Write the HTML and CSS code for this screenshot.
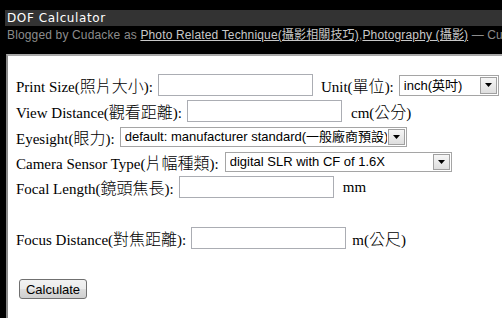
FILE: index.html
```html
<!DOCTYPE html>
<html lang="zh-Hant">
<head>
<meta charset="utf-8">
<title>DOF Calculator</title>
<link rel="stylesheet" href="styles.css">
</head>
<body>
<header class="blog-head">
  <h1 class="title">DOF Calculator</h1>
  <p class="byline">Blogged by Cudacke as <a href="#">Photo Related Technique(攝影相關技巧)</a>,<a href="#">Photography (攝影)</a> — Cudacke</p>
</header>
<main class="panel">
  <form class="dof-form">
    <div class="row">
      <label class="lbl">Print Size(<span class="zh">照片大小</span>):</label>
      <input class="txt" type="text">
      <label class="lbl unit-lbl">Unit(<span class="zh">單位</span>):</label>
      <span class="select sel-unit">
        <select><option>inch(英吋)</option><option>cm(公分)</option></select>
        <span class="drop"><svg width="7" height="4" viewBox="0 0 7 4"><path d="M0 0H7L3.5 4Z" fill="#000"/></svg></span>
      </span>
    </div>
    <div class="row">
      <label class="lbl">View Distance(<span class="zh">觀看距離</span>):</label>
      <input class="txt" type="text">
      <span class="lbl after">cm(<span class="zh">公分</span>)</span>
    </div>
    <div class="row row-sel">
      <label class="lbl">Eyesight(<span class="zh">眼力</span>):</label>
      <span class="select sel-eye">
        <select><option>default: manufacturer standard(一般廠商預設)</option></select>
        <span class="drop"><svg width="7" height="4" viewBox="0 0 7 4"><path d="M0 0H7L3.5 4Z" fill="#000"/></svg></span>
      </span>
    </div>
    <div class="row row-sel">
      <label class="lbl">Camera Sensor Type(<span class="zh">片幅種類</span>):</label>
      <span class="select sel-cam">
        <select><option>digital SLR with CF of 1.6X</option></select>
        <span class="drop"><svg width="7" height="4" viewBox="0 0 7 4"><path d="M0 0H7L3.5 4Z" fill="#000"/></svg></span>
      </span>
    </div>
    <div class="row">
      <label class="lbl">Focal Length(<span class="zh">鏡頭焦長</span>):</label>
      <input class="txt" type="text">
      <span class="lbl after">mm</span>
    </div>
    <div class="row spacer"></div>
    <div class="row">
      <label class="lbl">Focus Distance(<span class="zh">對焦距離</span>):</label>
      <input class="txt" type="text">
      <span class="lbl after-m">m(<span class="zh">公尺</span>)</span>
    </div>
    <div class="row spacer"></div>
    <div class="row">
      <button class="btn" type="button">Calculate</button>
    </div>
  </form>
</main>
</body>
</html>
```
FILE: styles.css
```css
html, body {
  margin: 0;
  padding: 0;
  background: #000;
  overflow: hidden;
  width: 502px;
  height: 318px;
}

.blog-head {
  padding: 10px 0 0 5px;
  height: 54px;
  box-sizing: border-box;
}

.title {
  margin: 0;
  height: 16px;
  background: #333;
  color: #fff;
  font: 12px/16px "DejaVu Sans", sans-serif;
  letter-spacing: 0.6px;
  font-weight: normal;
  padding-left: 2px;
  white-space: nowrap;
}

.byline {
  margin: 2px 0 0 2px;
  color: #8c8c8c;
  font: 12px/14px "Liberation Sans", "Noto Sans CJK TC", sans-serif;
  letter-spacing: 0.15px;
  white-space: nowrap;
  overflow: hidden;
}

.byline a {
  color: #c8c8c8;
  text-decoration: underline;
}

.panel {
  margin-left: 6px;
  border-top: 2px solid #a8a8a8;
  border-left: 2px solid #8a8a8a;
  background: #fff;
  height: 264px;
  padding: 16px 0 0 8px;
  box-sizing: border-box;
  overflow: hidden;
}

.dof-form {
  margin: 0;
}

.row {
  display: flex;
  align-items: center;
  white-space: nowrap;
  height: 26px;
}

.row-sel {
  height: 25px;
}

.spacer {
  height: 25px;
}

.lbl {
  font: 15px "Liberation Serif", "Noto Sans CJK TC", serif;
  color: #000;
}

.zh {
  font-family: "Noto Sans CJK TC", sans-serif;
  font-size: 16px;
  font-weight: 300;
}

.txt {
  margin: 0 0 0 5px;
  width: 155px;
  height: 22px;
  box-sizing: border-box;
  border: 1px solid #abadb3;
  padding: 0 3px;
  font: 13px "Liberation Sans", sans-serif;
  background: #fff;
}

.unit-lbl {
  margin-left: 8px;
}

.after {
  margin-left: 9px;
}

.after-m {
  margin-left: 6px;
}

.select {
  margin-left: 5px;
  display: inline-flex;
  align-items: stretch;
  box-sizing: border-box;
  border: 1px solid #a5a5a5;
  background: #fff;
}

.select select {
  appearance: none;
  -webkit-appearance: none;
  border: 0;
  outline: 0;
  margin: 0;
  padding: 0 0 0 4px;
  background: transparent;
  font: 13px "Liberation Sans", "Noto Sans CJK TC", sans-serif;
  color: #000;
  flex: 1;
  min-width: 0;
}

.drop {
  width: 17px;
  margin: 1px;
  box-sizing: border-box;
  border: 1px solid #a0a0a0;
  background: linear-gradient(#f6f6f6, #dedede);
  display: flex;
  align-items: center;
  justify-content: center;
}

.sel-unit {
  width: 100px;
  height: 21px;
}

.sel-eye {
  width: 287px;
  height: 20px;
}

.sel-cam {
  margin-left: 6px;
  width: 227px;
  height: 20px;
}

.btn {
  margin-left: 3px;
  width: 68px;
  height: 20px;
  border: 1px solid #707070;
  border-radius: 3px;
  background: linear-gradient(#f2f2f2 0%, #ebebeb 50%, #dddddd 51%, #cfcfcf 100%);
  font: 13px "Liberation Sans", sans-serif;
  color: #000;
  padding: 0;
}
```
